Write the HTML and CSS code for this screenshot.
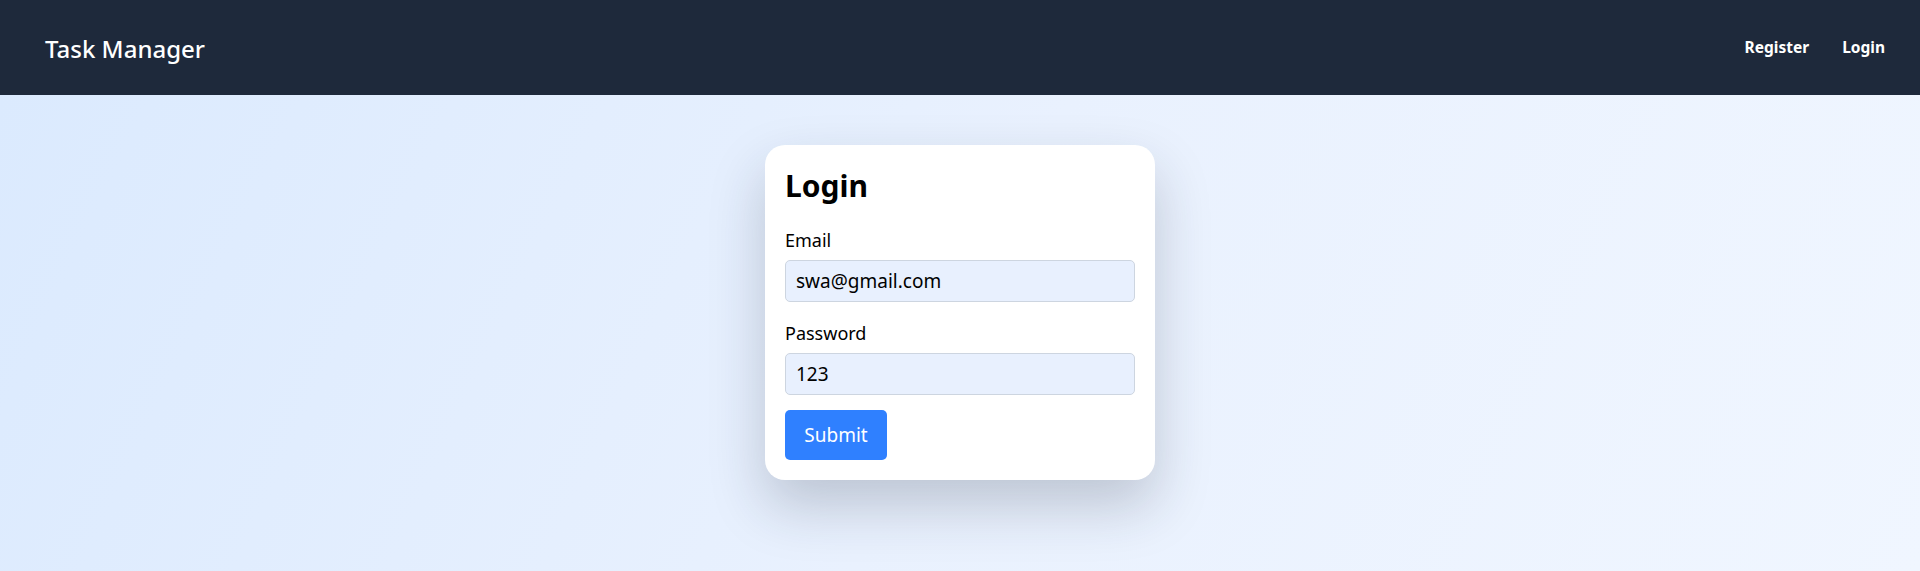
FILE: index.html
```html
<!DOCTYPE html>
<html lang="en">
<head>
<meta charset="utf-8">
<title>Task Manager</title>
<link rel="stylesheet" href="styles.css">
</head>
<body>
<nav class="navbar">
  <a class="brand" href="#">Task Manager</a>
  <div class="nav-links">
    <a class="nav-link" href="#">Register</a>
    <a class="nav-link" href="#">Login</a>
  </div>
</nav>
<main class="page">
  <form class="card">
    <h2 class="card-title">Login</h2>
    <div class="field">
      <label class="label" for="email">Email</label>
      <input class="input" id="email" type="text" value="swa@gmail.com">
    </div>
    <div class="field field-last">
      <label class="label" for="password">Password</label>
      <input class="input" id="password" type="text" value="123">
    </div>
    <button class="btn" type="button">Submit</button>
  </form>
</main>
</body>
</html>
```

FILE: styles.css
```css
* { box-sizing: border-box; }
html, body { margin: 0; height: 100%; }
body {
  font-family: "Noto Sans", "Open Sans", sans-serif;
  color: #000;
  display: flex;
  flex-direction: column;
  min-height: 571px;
}
.navbar {
  height: 95px;
  flex: 0 0 95px;
  background: #1e293b;
  display: flex;
  align-items: center;
  justify-content: space-between;
  padding: 0 35px 0 45px;
}
.brand {
  color: #fff;
  text-decoration: none;
  font-size: 24px;
  font-weight: 500;
  line-height: 1;
  margin-top: 2px;
}
.nav-links {
  display: flex;
  gap: 33px;
}
.nav-link {
  color: #fff;
  text-decoration: none;
  font-size: 15.5px;
  font-weight: 700;
  line-height: 1;
}
.page {
  flex: 1;
  background: linear-gradient(115deg, #dbeafe 0%, #e9f1fe 50%, #f0f6ff 100%);
  display: flex;
  justify-content: center;
  align-items: flex-start;
  padding-top: 50px;
}
.card {
  width: 390px;
  background: #fff;
  border-radius: 20px;
  padding: 23px 20px 20px;
  box-shadow: 0 26px 55px rgba(30, 41, 59, 0.22);
}
.card-title {
  margin: 0 0 23px;
  font-size: 30px;
  font-weight: 700;
  line-height: 36px;
}
.field { margin-bottom: 18px; }
.field-last { margin-bottom: 15px; }
.label {
  display: block;
  font-size: 18px;
  line-height: 27px;
  margin-bottom: 6px;
}
.input {
  display: block;
  width: 100%;
  height: 42px;
  background: #e8f0fe;
  border: 1px solid #cdd5e0;
  border-radius: 5px;
  padding: 0 10px;
  font-family: inherit;
  font-size: 19px;
  color: #000;
  outline: none;
}
.btn {
  height: 50px;
  width: 102px;
  background: #2f80ff;
  color: #fff;
  border: none;
  border-radius: 5px;
  font-family: inherit;
  font-size: 19px;
  padding: 0;
  display: block;
}
```
